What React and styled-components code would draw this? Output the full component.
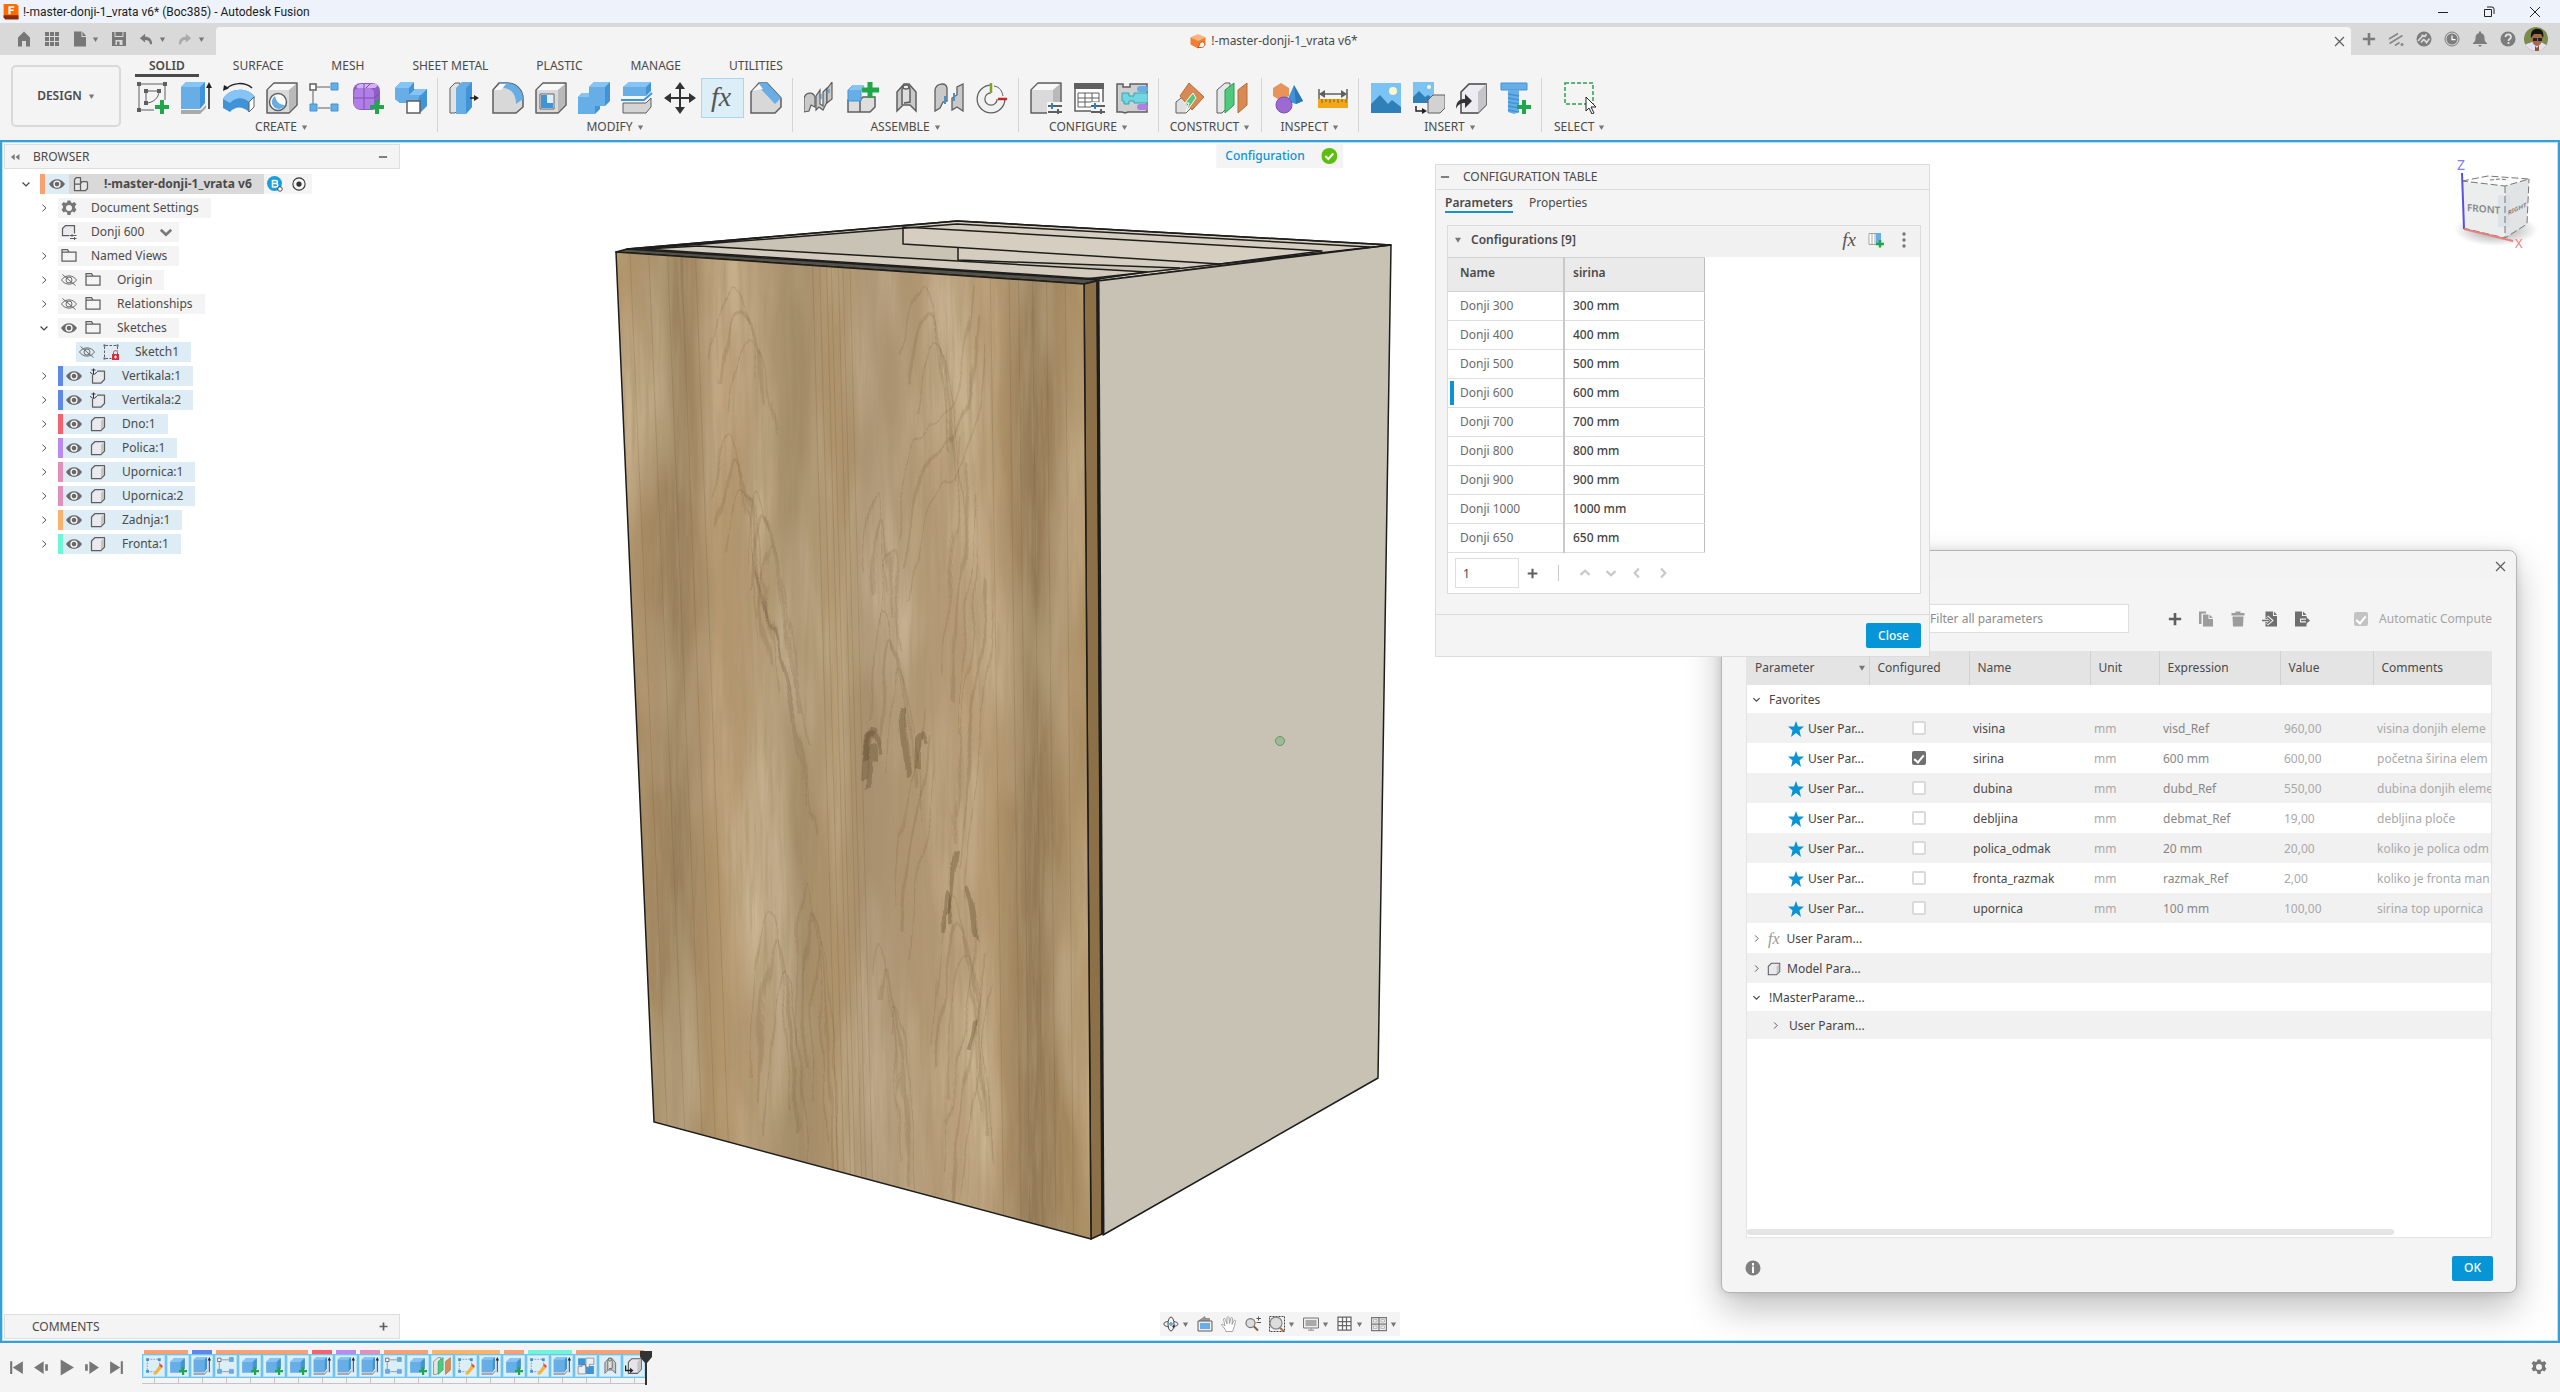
import React, { useState } from "react";
import styled, { createGlobalStyle } from "styled-components";

const GlobalStyle = createGlobalStyle`
  * { box-sizing: border-box; }
  body {
    margin: 0;
    background: #f4f4f4;
    color: #4a4a4a;
    font: 12px/16px "Noto Sans", "Open Sans", sans-serif;
  }
  button, input, select {
    font: inherit;
    color: inherit;
    margin: 0;
    padding: 0;
    border: 0;
    background: none;
  }
  button { cursor: pointer; }
  svg { display: block; flex: none; }
`;

/* ---------- icons ---------- */

const GREY = "#5f5f5f";
const BLUE = "#67ade6";
const BLUE_DARK = "#3f93d6";
const BLUE_LIGHT = "#86c4f5";
const SERIF = '"Liberation Serif", "DejaVu Serif", serif';

const bigPlus = <path d="M18 23h5v-5h4v5h5v4h-5v5h-4v-5h-5z" fill="#22a64b" />;
const sliders = (
  <g strokeWidth="2" fill="none">
    <path d="M18 24h14M18 30h14" stroke={GREY} />
    <path d="M22 21v6" stroke="#1e88d2" />
    <path d="M28 27v5" stroke={GREY} />
  </g>
);
const greyBox = (
  <g stroke={GREY} strokeWidth="1.5" strokeLinejoin="round">
    <path d="M1 8L8 1h23v22l-8 8H1z" fill="#dadada" />
    <path d="M2 8L8 2h22l-7 6z" fill="#f8f8f8" stroke="none" />
    <path d="M23 8l7-6v20l-7 8z" fill="#b9b9b9" stroke="none" />
  </g>
);

const shapes = {
  sketch: (
    <>
      <path d="M3 2h25M2 3v26M28 3v15M3 28h14" stroke={GREY} fill="none" />
      <path d="M9 9h13M9 9v12M22 9c0 7-6 12-13 12" stroke={GREY} fill="none" />
      <path d="M0 0h4v4H0zM26 0h4v4h-4zM0 26h4v4H0zM7 7h4v4H7zM20 7h4v4h-4zM7 19h4v4H7z" fill={GREY} />
      {bigPlus}
    </>
  ),
  extrude: (
    <>
      <path d="M1 28l20 0 5-5v3l-6 6H1z" fill="#a9a9a9" />
      <path d="M1 5l5-5h19l-5 5v22H1z" fill={BLUE} />
      <path d="M1 5l5-5h19l-5 5z" fill={BLUE_LIGHT} />
      <path d="M20 5l5-5v21l-5 6z" fill={BLUE_DARK} />
      <path d="M29 27V4" stroke="#222" strokeWidth="1.5" />
      <path d="M26 6l3-6 3 6z" fill="#222" />
    </>
  ),
  revolve: (
    <>
      <path d="M3 7C10 0 22 0 29 6" stroke="#222" strokeWidth="1.5" fill="none" />
      <path d="M0 9l1-6 5 3z" fill="#222" />
      <path d="M0 17C7 5 25 5 32 15l-6 5v10c-6-6-14-6-19 0L0 26z" fill={BLUE_DARK} />
      <path d="M0 17C7 5 25 5 32 15l-6 5C20 15 13 15 7 21z" fill={BLUE_LIGHT} />
      <path d="M26 20l5-5v10l-5 5z" fill="#fff" stroke={GREY} />
    </>
  ),
  hole: (
    <>
      {greyBox}
      <circle cx="12" cy="20" r="8.5" fill="#fff" stroke={GREY} strokeWidth="1.5" />
      <path d="M9 14a7 7 0 1 0 10 9c-6 0-9-4-10-9z" fill={BLUE} />
    </>
  ),
  pattern: (
    <>
      <path d="M8 5h13M4 9v15M9 26h12" stroke={GREY} fill="none" />
      <path d="M1 2h6v6H1z" fill="#fff" stroke={GREY} strokeWidth="1.5" />
      <path d="M22 1h7v7h-7zM1 22h7v7H1zM22 22h7v7h-7z" fill={BLUE} stroke={BLUE_DARK} />
    </>
  ),
  form: (
    <>
      <rect x="1" y="1" width="27" height="27" rx="8" fill="#8d5fc4" />
      <rect x="2" y="6" width="20" height="21" rx="5" fill="#b07fe6" />
      <path d="M9 2h14c3 0 3 2 0 4H6c-3 0-1-4 3-4z" fill="#d5b0fa" />
      <path d="M12 2v25M2 16h20l5-4M18 2l-4 4" stroke="#7f4cb8" fill="none" />
      {bigPlus}
    </>
  ),
  derive: (
    <>
      <path d="M0 6l6-6h13v7h13v17l-6 6H14v-9H5l-5-4z" fill={BLUE_DARK} />
      <path d="M0 6l6-6h13l-5 6v7h11l-3 8H5l-5-4z" fill={BLUE} />
      <path d="M0 6l6-6h13l-5 6zM14 13l6-6h12l-6 6z" fill={BLUE_LIGHT} />
      <path d="M12 19h13v12H12z" fill="#fff" stroke={GREY} strokeWidth="1.5" />
    </>
  ),
  pressPull: (
    <>
      <path d="M1 6l5-5h5v25l-5 5H1z" fill="#e2e2e2" stroke={GREY} />
      <path d="M7 6l6-6h10v25l-6 7H7z" fill={BLUE} />
      <path d="M17 6l6-6v25l-6 7z" fill={BLUE_DARK} />
      <path d="M21 16h6" stroke="#222" strokeWidth="1.5" />
      <path d="M25 13l5 3-5 3z" fill="#222" />
    </>
  ),
  fillet: (
    <>
      <path d="M1 8l6-7h8c9 0 16 7 16 16v8l-7 6H1z" fill="#d8d8d8" stroke={GREY} strokeWidth="1.5" />
      <path d="M7 1h8c9 0 16 7 16 16l-7 5C24 12 19 7 12 6z" fill={BLUE} />
      <path d="M2 8l6-6h6l-5 6z" fill="#fafafa" />
    </>
  ),
  shell: (
    <>
      {greyBox}
      <path d="M5 12h14v15H5z" fill="#fff" stroke={GREY} />
      <path d="M6 13h6v8h6v5H6z" fill={BLUE_DARK} />
      <path d="M12 13h6v8h-6z" fill="#dff0fc" />
    </>
  ),
  combine: (
    <>
      <path d="M0 15l4-4h7V5l5-5h16v19l-5 5h-5v3l-5 5H0z" fill={BLUE_DARK} />
      <path d="M0 15h11V5h16v19H17v8H0z" fill={BLUE} />
      <path d="M11 5l5-5h16l-5 5zM0 15l4-4h7v4z" fill={BLUE_LIGHT} />
    </>
  ),
  split: (
    <>
      <path d="M2 5l6-5h22l-5 5v9H2z" fill={BLUE} />
      <path d="M2 5l6-5h22l-5 5z" fill={BLUE_LIGHT} />
      <path d="M25 5l5-5v9l-5 5z" fill={BLUE_DARK} />
      <path d="M0 18h23l8-7" stroke={BLUE_DARK} strokeWidth="2" fill="none" />
      <path d="M2 21h23l5-5v9l-5 6H2z" fill="#d4d4d4" stroke={GREY} />
    </>
  ),
  move: (
    <path d="M16 0l5 7h-4v8h8v-4l7 5-7 5v-4h-8v8h4l-5 7-5-7h4v-8H7v4l-7-5 7-5v4h8V7h-4z" fill="#333" />
  ),
  fx: (
    <text x="4" y="24" fontFamily={SERIF} fontStyle="italic" fontSize="28" fill="#555">fx</text>
  ),
  chamfer: (
    <>
      <path d="M1 10l8-9h8l14 15v9l-6 6H1z" fill="#d8d8d8" stroke={GREY} strokeWidth="1.5" />
      <path d="M9 1h8l14 15-6 6L10 6z" fill={BLUE} />
      <path d="M2 9l7-7 4 5z" fill="#f8f8f8" />
    </>
  ),
  joint: (
    <g fill="#c9c9c9" stroke={GREY} strokeWidth="1.2">
      <path d="M0 30V17c1-7 9-8 11-2v10l-4-2-2 6z" />
      <path d="M12 28V14l4-6v14l3 2V10l4-4v14l-4 8-4-3z" />
      <path d="M23 21V7l5-7v17z" />
      <path d="M17 12v5M25 7v4" stroke={BLUE_DARK} />
    </g>
  ),
  newComponent: (
    <>
      <path d="M1 18h12v12H1zM13 18l3-3h12v10l-5 5H13z" fill="#dedede" stroke={GREY} strokeWidth="1.5" />
      <path d="M1 8l4-4h12l-3 4v11H1z" fill={BLUE} stroke={BLUE_DARK} />
      <path d="M1 8l4-4h12l-3 4z" fill={BLUE_LIGHT} />
      <path d="M23 0v16M15 8h17" stroke="#22a64b" strokeWidth="5" />
    </>
  ),
  asBuilt: (
    <g fill="#c9c9c9" stroke={GREY} strokeWidth="1.5">
      <path d="M7 29V10l7-8h5l7 8v19l-6-6h-7z" />
      <path d="M12 23V8c0-6 8-6 8 0v12l-6 1" fill="#dedede" />
      <ellipse cx="16" cy="5" rx="3" ry="2" fill="#eee" />
    </g>
  ),
  jointOrigin: (
    <g fill="#c9c9c9" stroke={GREY} strokeWidth="1.3">
      <path d="M2 29V8c1-7 11-8 12-2v13l-4 1-3 6z" />
      <path d="M19 28V16l5-3V5l6-3v27l-6-4z" />
      <path d="M12 14v8M21 11v8" stroke={BLUE_DARK} strokeWidth="2" />
    </g>
  ),
  motion: (
    <>
      <circle cx="15" cy="17" r="10" fill="none" stroke={GREY} strokeWidth="9" />
      <circle cx="15" cy="17" r="10" fill="none" stroke="#f1f1f1" strokeWidth="6.5" />
      <path d="M15 17V1h16v16z" fill="#f4f4f4" />
      <path d="M15 1v10" stroke="#7da32b" strokeWidth="2.5" />
      <path d="M22 17h9" stroke="#c22a2a" strokeWidth="2.5" />
      <path d="M18 4c6 1 8 5 9 10" stroke={GREY} fill="none" />
    </>
  ),
  config: <>{greyBox}<path d="M17 20h15v12H17z" fill="#f4f4f4" />{sliders}</>,
  configTable: (
    <>
      <path d="M2 4h28v25H2z" fill="#fff" stroke={GREY} strokeWidth="1.5" />
      <path d="M1 1h30v6H1z" fill={GREY} />
      <path d="M5 11h21v14H5zM5 16h21M5 20h21M12 11v14M19 11v14" stroke={GREY} fill="none" />
      <path d="M18 20h14v12H18z" fill="#f4f4f4" />
      {sliders}
    </>
  ),
  plugs: (
    <>
      <path d="M1 2h6v3h7V2h17v28H12l-3 1-3-1H1z" fill="#cfcfcf" stroke={GREY} strokeWidth="1.5" />
      <path d="M6 11h7v3h5v-3h14v10H18v-2h-5v3H8v-3H6z" fill="#71d6df" stroke="#3aa3ad" />
      <rect x="21" y="4" width="11" height="6" rx="3" fill={BLUE} />
      <rect x="21" y="22" width="11" height="6" rx="3" fill="#b07fe6" />
    </>
  ),
  planeTangent: (
    <>
      <path d="M3 31V20l5-4h10v10l-5 5z" fill="#e0e0e0" stroke={GREY} />
      <path d="M16 1l15 14-12 13-12-14z" fill="#d88a55" stroke="#b86a35" />
      <path d="M20 11L12 21h4l-3 9 10-14z" fill="#4fc97c" stroke="#fff" />
    </>
  ),
  plane: (
    <>
      <path d="M1 8l8-7h5v22l-8 8H1z" fill="#e6e6e6" stroke={GREY} />
      <path d="M9 8l9-7v22l-9 8z" fill="#4fc97c" stroke="#2a9a55" />
      <path d="M22 8l9-7v22l-9 8z" fill="#d88a55" stroke="#b86a35" />
    </>
  ),
  inspect: (
    <>
      <path d="M8 1l8 5v8l-8 5-8-5V6z" fill="#e7935a" />
      <path d="M21 3l9 16-7 3-9-3z" fill={BLUE_DARK} />
      <path d="M21 3l2 19 7-3z" fill="#2f78b8" />
      <circle cx="11" cy="23" r="8" fill="#9b6ad2" stroke="#7f4cb8" />
    </>
  ),
  measure: (
    <>
      <path d="M3 7v10M31 7v10M4 12h26" stroke={GREY} strokeWidth="1.5" />
      <path d="M3 12l6-4v8zM31 12l-6-4v8z" fill={GREY} />
      <path d="M2 17h30v9H2z" fill="#f2a71b" />
      <path d="M6 17v4M10 17v3M14 17v4M18 17v3M22 17v4M26 17v3M30 17v4" stroke="#8a5c05" />
    </>
  ),
  image: (
    <>
      <path d="M1 1h30v30H1z" fill="#7cc3f5" />
      <path d="M1 22l9-9 8 9 4-4 9 7v6H1z" fill="#2f7fb8" />
      <circle cx="23" cy="9" r="4" fill="#fdf6c8" />
    </>
  ),
  decal: (
    <>
      <path d="M0 0h21v21H0z" fill="#7cc3f5" />
      <path d="M0 15l6-6 6 6 3-2 6 4v4H0z" fill="#2f7fb8" />
      <circle cx="16" cy="5" r="2" fill="#fdf6c8" />
      <path d="M15 18l5-5h12v13l-5 5H15z" fill="#d2d2d2" stroke={GREY} />
      <path d="M3 24v5h8" stroke="#222" strokeWidth="1.5" fill="none" />
      <path d="M9 26l5 3-5 3z" fill="#222" />
    </>
  ),
  insertDerive: (
    <>
      <path d="M5 10l8-8h17v21l-8 8H5z" fill="#ececf2" stroke="#444" strokeWidth="1.5" />
      <path d="M22 10l8-8v21l-8 8z" fill="#c5c5cb" />
      <path d="M0 27c0-8 4-10 9-10v-5l7 7-7 7v-5c-4 0-7 1-9 6z" fill="#333" />
    </>
  ),
  fastener: (
    <>
      <path d="M2 1h26v7H2z" fill={BLUE} stroke={BLUE_DARK} />
      <path d="M9 8h11v22l-5 2-6-2z" fill={BLUE} />
      <path d="M9 12l11 2M9 16l11 2M9 20l11 2M9 24l11 2M9 28l11 2" stroke={BLUE_DARK} strokeWidth="1.5" />
      {bigPlus}
    </>
  ),
  select: (
    <>
      <path d="M1 1h28v21H1z" fill="none" stroke="#2aa152" strokeWidth="1.5" strokeDasharray="4 2" />
      <path d="M22 15v14l3-3 3 6 2-1-3-6h5z" fill="#fff" stroke="#222" />
    </>
  ),
  sketchEdit: (
    <>
      <path d="M5 4h20M5 26h12M4 5v20M26 5v12" stroke={GREY} strokeDasharray="3 2" />
      <path d="M2 2h5v5H2zM23 2h5v5h-5zM2 23h5v5H2z" fill={BLUE_DARK} />
      <path d="M16 28l10-14 5 4-10 12-6 2z" fill="#f2b43a" />
      <path d="M25 15l2-3 5 4-2 3z" fill="#e5484d" />
    </>
  ),
  boxPlus: (
    <>
      <path d="M2 9l7-7h19v18l-7 8H2z" fill={BLUE} />
      <path d="M2 9l7-7h19l-7 7z" fill={BLUE_LIGHT} />
      <path d="M21 9l7-7v18l-7 8z" fill={BLUE_DARK} />
      {bigPlus}
    </>
  ),
  rigid: (
    <>
      <path d="M2 2h13v13H2zM16 16h14v14H16z" fill={BLUE_DARK} />
      <path d="M16 2h14v11h-8v5h-6zM2 17h7v-3h6v16H2z" fill="#eee" stroke={GREY} />
    </>
  ),
  insertBody: (
    <>
      <path d="M6 9l6-6h17v19l-7 7H6z" fill="#e4e4ea" stroke={GREY} strokeWidth="2" />
      <path d="M22 9l6-6v19l-6 7z" fill="#c4c4c4" />
      <path d="M1 15v9h9" stroke="#222" strokeWidth="2.5" fill="none" />
      <path d="M9 19l6 5-6 5z" fill="#222" />
    </>
  ),
  body: (
    <>
      <path d="M3 10l7-7h19v19l-7 7H3z" fill="#e9e9ee" stroke={GREY} strokeWidth="2.5" strokeLinejoin="round" />
      <path d="M22 10l6-6v17l-6 7z" fill="#c4c4c4" />
    </>
  ),
  grounded: (
    <>
      <path d="M5 12l6-6h18v17l-7 7H5z" fill="#e9e9ee" stroke={GREY} strokeWidth="2.5" strokeLinejoin="round" />
      <path d="M0 0h14v14H0z" fill="#deedf5" />
      <path d="M7 1v12M3 4h8M1 8c1 6 11 6 12 0" stroke="#333" strokeWidth="2" fill="none" />
    </>
  ),
  folder: (
    <path d="M2 6V3h11l3 5h14v18H2zM2 8h14" fill="none" stroke={GREY} strokeWidth="2.5" />
  ),
  gear: (
    <path fillRule="evenodd" fill="#777" d="M13 1h6l1 4 3 1 4-2 4 5-3 3v4l3 3-4 6-4-2-3 2-1 5h-6l-1-5-3-2-4 2-4-6 3-3v-4L1 9l4-5 4 2 3-1zM16 10a6 6 0 1 0 0 12 6 6 0 0 0 0-12z" />
  ),
  docConfig: (
    <>
      <path d="M3 9l6-6h18v20H3z" fill="#e9e9ee" stroke={GREY} strokeWidth="2.5" />
      <path d="M17 19h15v13H17z" fill="#f4f4f4" />
      <path d="M18 23h13M18 29h13M22 20v6M27 26v6" stroke={GREY} strokeWidth="2" />
    </>
  ),
  assembly: (
    <path d="M3 16V7l4-4h8v13zM15 16l3-5h9l2 2v12l-4 4H15zM3 16h12v13H3z" fill="#e6e6e6" stroke={GREY} strokeWidth="2.5" strokeLinejoin="round" />
  ),
  eye: (
    <>
      <path d="M0 16C8 3 24 3 32 16 24 29 8 29 0 16z" fill="#6a6a6a" />
      <circle cx="16" cy="16" r="6" fill="#6a6a6a" stroke="#fff" strokeWidth="2.5" />
    </>
  ),
  eyeOff: (
    <g fill="none" stroke="#6a6a6a" strokeWidth="2">
      <path d="M1 16C8 5 24 5 31 16 24 27 8 27 1 16z" />
      <circle cx="16" cy="16" r="6" />
      <path d="M3 5l26 22" />
    </g>
  ),
  lockedSketch: (
    <>
      <path d="M5 3h22M3 5v22M29 5v9M5 29h12" stroke={GREY} strokeWidth="2" strokeDasharray="5 3" />
      <path d="M1 1h4v4H1zM27 1h4v4h-4zM1 27h4v4H1z" fill={GREY} />
      <path d="M18 20h14v12H18z" fill="#cc3340" />
      <path d="M21 20v-3c0-5 8-5 8 0v3" stroke="#cc3340" strokeWidth="2" fill="none" />
      <path d="M22 26h6M25 23v6" stroke="#fff" strokeWidth="2" />
    </>
  ),
  home: <path d="M16 1l12 12v18h-8V20h-8v11H4V13z" fill="#777" />,
  grid: <path d="M2 2h8v8H2zM12 2h8v8h-8zM22 2h8v8h-8zM2 12h8v8H2zM12 12h8v8h-8zM22 12h8v8h-8zM2 22h8v8H2zM12 22h8v8h-8zM22 22h8v8h-8z" fill="#777" />,
  file: <path d="M4 1h15v11h9v19H4zM21 1l7 9h-7z" fill="#777" />,
  save: <path fillRule="evenodd" d="M2 2h5v10h18V2h5v28H2zM9 2h14v8H9zM9 18v10h14V18zM12 21h5v7h-5z" fill="#777" />,
  undo: <path d="M2 14L14 4v7c10 0 16 6 16 17h-5c0-7-4-10-11-10v6z" fill="#777" />,
  redo: <path d="M30 14L18 4v7C8 11 2 17 2 28h5c0-7 4-10 11-10v6z" fill="#aaa" />,
  minus: <path d="M3 13h26v6H3z" fill="#777" />,
  add: <path d="M13 2h6v11h11v6H19v11h-6V19H2v-6h11z" fill="currentColor" />,
  close: <path d="M5 5l22 22M27 5L5 27" stroke="currentColor" strokeWidth="3" />,
  chevDown: <path d="M5 11l11 11 11-11" fill="none" stroke="currentColor" strokeWidth="4" />,
  chevRight: <path d="M11 5l11 11-11 11" fill="none" stroke="currentColor" strokeWidth="3" />,
  boldDown: <path d="M4 11l12 11 12-11" fill="none" stroke="currentColor" strokeWidth="6" />,
  boldUp: <path d="M4 21l12-11 12 11" fill="none" stroke="currentColor" strokeWidth="6" />,
  boldRight: <path d="M11 4l11 12-11 12" fill="none" stroke="currentColor" strokeWidth="6" />,
  boldLeft: <path d="M21 4L10 16l11 12" fill="none" stroke="currentColor" strokeWidth="6" />,
  rewind: <path d="M15 6v20L3 16zM30 6v20L18 16z" fill="#777" />,
  caret: <path d="M4 7h24L16 27z" fill="#777" />,
  extensions: (
    <>
      <path d="M2 16L20 5M3 25L29 9M14 29l9-6" stroke="#888" strokeWidth="3.5" />
      <circle cx="28" cy="27" r="3" fill="#888" />
    </>
  ),
  jobs: (
    <>
      <circle cx="16" cy="16" r="15" fill="#7c7c7c" />
      <path d="M4 20L14 9M10 23l6-7M11 8l7 3 3-5M16 17l5 6 6-8" stroke="#d9d9d9" strokeWidth="3.5" fill="none" />
    </>
  ),
  clock: (
    <>
      <circle cx="16" cy="16" r="14" fill="none" stroke="#7c7c7c" strokeWidth="2" />
      <circle cx="16" cy="16" r="11" fill="#7c7c7c" />
      <path d="M16 9v8h7" stroke="#fff" strokeWidth="2.5" fill="none" />
    </>
  ),
  bell: <path d="M14 1h4v3c5 1 7 5 7 10 0 6 2 8 5 10v2H2v-2c3-2 5-4 5-10 0-5 2-9 7-10zM12 28h8l-4 4z" fill="#7c7c7c" />,
  help: (
    <>
      <circle cx="16" cy="16" r="15" fill="#7c7c7c" />
      <path d="M11 12c0-7 11-7 11 0 0 4-5 4-5 8M17 22v4" stroke="#e4e4e4" strokeWidth="3.5" fill="none" />
    </>
  ),
  fusion: (
    <>
      <path d="M3 2h24l4 4v24H6l-3-4z" fill="#ff6b00" />
      <path d="M3 23h28v8H6l-3-4z" fill="#8a2b06" />
      <path d="M12 6h11v3h-7v3h6v3h-6v6h-4z" fill="#fff" />
    </>
  ),
  docCube: (
    <>
      <path d="M1 9l15-6 15 6v14l-15 8L1 23z" fill="#f07f35" />
      <path d="M1 9l15-6 15 6-15 7z" fill="#ffb27c" />
      <path d="M20 20c4-4 8-2 9 1 2 4-2 8-6 8h-8c2-1 4-4 5-9z" fill="#fff" stroke="#c9551a" strokeWidth="2" />
    </>
  ),
  check: (
    <>
      <circle cx="16" cy="16" r="16" fill="#5cbf0d" />
      <path d="M8 16l6 6 10-11" stroke="#fff" strokeWidth="4" fill="none" />
    </>
  ),
  badgeB: (
    <>
      <circle cx="15" cy="15" r="15" fill="#1b9fdc" />
      <path d="M11 8v15M11 9h6c5 0 5 6 0 6h-6M17 15c6 0 6 7 0 7h-6" stroke="#fff" strokeWidth="3" fill="none" />
      <circle cx="26" cy="26" r="4.5" fill="#fff" stroke="#222" strokeWidth="1.5" />
    </>
  ),
  radio: (
    <>
      <circle cx="16" cy="16" r="14" fill="none" stroke="#333" strokeWidth="2.5" />
      <circle cx="16" cy="16" r="6" fill="#333" />
    </>
  ),
  columnAdd: (
    <>
      <path d="M2 3h18v22H2zM8 3v22M14 3v22" fill="#fff" stroke="#888" strokeWidth="1.5" />
      <path d="M16 2h10v22H16z" fill={BLUE} />
      <path d="M24 16v15M16 24h16" stroke="#22a64b" strokeWidth="5" />
    </>
  ),
  kebab: (
    <g fill="#777"><circle cx="16" cy="4" r="3.5" /><circle cx="16" cy="16" r="3.5" /><circle cx="16" cy="28" r="3.5" /></g>
  ),
  copy: <path d="M2 1h14v4h-9v21H2zM10 7h11v9h9v15H10zM23 7l7 7h-7z" fill="#9c9c9c" />,
  trash: <path d="M3 4h8V1h10v3h8v5H3zM5 11h22l-1 20H6z" fill="#9c9c9c" />,
  importFile: (
    <>
      <path d="M7 1h15v9h8v21H7zM24 1l6 7h-6z" fill="#6e6e6e" />
      <path d="M0 19h12M10 11l9 8-9 8" stroke="#f4f4f4" strokeWidth="6" fill="none" />
      <path d="M0 19h12M10 12l8 7-8 7" stroke="#6e6e6e" strokeWidth="3" fill="none" />
    </>
  ),
  exportFile: (
    <>
      <path d="M2 1h14v9h9v21H2zM18 1l7 7h-7z" fill="#6e6e6e" />
      <path d="M12 19h14" stroke="#f4f4f4" strokeWidth="8" />
      <path d="M14 19h12" stroke="#6e6e6e" strokeWidth="3" />
      <path d="M24 12l8 7-8 7z" fill="#6e6e6e" />
    </>
  ),
  star: <path d="M16 0l4 11h12l-9 8 3 13-10-8-10 8 3-13-9-8h12z" fill="#0c93d4" />,
  info: (
    <>
      <circle cx="16" cy="16" r="15" fill="#7f7f7f" />
      <path d="M16 6v5M16 13v13" stroke="#fff" strokeWidth="4" />
    </>
  ),
  orbit: (
    <g fill="none" stroke="#4a4a4a" strokeWidth="2">
      <ellipse cx="16" cy="16" rx="6" ry="14" />
      <path d="M22 11c11 2 11 9-2 10M12 22C-2 20-1 12 10 11" />
      <circle cx="16" cy="16" r="3" fill={BLUE} stroke={BLUE} />
      <path d="M23 17l-5 4 5 4z" fill="#333" stroke="none" />
    </g>
  ),
  lookAt: (
    <>
      <path d="M2 10h28v20H2z" fill="#eee" stroke={GREY} strokeWidth="2" />
      <path d="M6 14h20v12H6z" fill={BLUE} />
      <path d="M4 9l12-8v4h9v4z" fill="#999" stroke={GREY} />
    </>
  ),
  pan: (
    <path d="M10 31c-1-5-6-9-9-14 3-2 5 1 7 3L5 6c1-2 3-1 4 1l3 9V3c1-2 3-2 4 0l1 12 3-11c1-2 3-1 3 1l-1 12 4-8c1-1 4-1 3 2-2 7-3 14-6 20z" fill="#fff" stroke="#888" strokeWidth="1.5" />
  ),
  zoomTool: (
    <>
      <path d="M17 20l9 9" stroke="#7a6248" strokeWidth="4" />
      <circle cx="11" cy="14" r="9" fill="#ddd" stroke="#777" strokeWidth="2.5" />
      <path d="M27 1v8M23 5h9M23 13h9" stroke="#555" strokeWidth="2" />
    </>
  ),
  fit: (
    <>
      <path d="M1 1h30v30H1z" fill="none" stroke="#444" strokeWidth="2" strokeDasharray="4 2" />
      <path d="M20 22l9 8" stroke="#a5713a" strokeWidth="4" />
      <circle cx="14" cy="14" r="12" fill="#ddd" stroke="#888" strokeWidth="2.5" />
    </>
  ),
  display: (
    <>
      <path d="M1 4h30v20H1z" fill="#eee" stroke="#777" strokeWidth="2" />
      <path d="M5 8h22v12H5zM10 27h12v3H10zM14 24h4v4h-4z" fill="#aaa" />
    </>
  ),
  gridView: <path d="M2 2h26v26H2zM2 11h26M2 19h26M11 2v26M19 2v26" fill="#fff" stroke="#666" strokeWidth="2.5" />,
  viewports: (
    <>
      <path d="M1 3h30v26H1zM1 16h30M16 3v26" fill="#eee" stroke="#777" strokeWidth="2.5" />
      <path d="M5 7h7v5H5zM20 7h7v5h-7zM5 20h7v5H5zM20 20h7v5h-7z" fill="none" stroke="#aaa" strokeWidth="1.5" />
    </>
  ),
  first: <path d="M4 4h4v24H4zM28 4v24L9 16z" fill="#777" />,
  prev: <path d="M20 4v24L2 16zM23 10h5v12h-5z" fill="#777" />,
  play: <path d="M5 1l25 15L5 31z" fill="#777" />,
  next: <path d="M12 4v24l18-12zM4 10h5v12H4z" fill="#777" />,
  last: <path d="M24 4h4v24h-4zM4 4v24l19-12z" fill="#777" />,
};

function Icon({ name, size = 16 }) {
  return (
    <svg width={size} height={size} viewBox="0 0 32 32" aria-hidden="true">
      {shapes[name]}
    </svg>
  );
}

/* ---------- data ---------- */

const ribbonTabs = ["SOLID", "SURFACE", "MESH", "SHEET METAL", "PLASTIC", "MANAGE", "UTILITIES"];

const ribbonGroups = [
  { label: "CREATE", tools: ["sketch", "extrude", "revolve", "hole", "pattern", "form", "derive"] },
  { label: "MODIFY", tools: ["pressPull", "fillet", "shell", "combine", "split", "move", "fx", "chamfer"] },
  { label: "ASSEMBLE", tools: ["joint", "newComponent", "asBuilt", "jointOrigin", "motion"] },
  { label: "CONFIGURE", tools: ["config", "configTable", "plugs"] },
  { label: "CONSTRUCT", tools: ["planeTangent", "plane"], wide: true },
  { label: "INSPECT", tools: ["inspect", "measure"] },
  { label: "INSERT", tools: ["image", "decal", "insertDerive", "fastener"] },
  { label: "SELECT", tools: ["select"] },
];

const treeNodes = [
  { label: "Document Settings", icon: "gear", arrow: "chevRight" },
  { label: "Donji 600", icon: "docConfig", picker: true },
  { label: "Named Views", icon: "folder", arrow: "chevRight" },
  { label: "Origin", icon: "folder", eye: "eyeOff", arrow: "chevRight" },
  { label: "Relationships", icon: "folder", eye: "eyeOff", arrow: "chevRight" },
  { label: "Sketches", icon: "folder", eye: "eye", arrow: "chevDown" },
  { label: "Sketch1", icon: "lockedSketch", eye: "eyeOff", level: 2, active: true },
  { label: "Vertikala:1", icon: "grounded", eye: "eye", arrow: "chevRight", bar: "#5f87ea", active: true },
  { label: "Vertikala:2", icon: "grounded", eye: "eye", arrow: "chevRight", bar: "#5f87ea", active: true },
  { label: "Dno:1", icon: "body", eye: "eye", arrow: "chevRight", bar: "#f5616f", active: true },
  { label: "Polica:1", icon: "body", eye: "eye", arrow: "chevRight", bar: "#bb8af0", active: true },
  { label: "Upornica:1", icon: "body", eye: "eye", arrow: "chevRight", bar: "#e38fbb", active: true },
  { label: "Upornica:2", icon: "body", eye: "eye", arrow: "chevRight", bar: "#e38fbb", active: true },
  { label: "Zadnja:1", icon: "body", eye: "eye", arrow: "chevRight", bar: "#fbb26b", active: true },
  { label: "Fronta:1", icon: "body", eye: "eye", arrow: "chevRight", bar: "#6ff5d7", active: true },
];

const configurations = [300, 400, 500, 600, 700, 800, 900, 1000, 650];

const favorites = [
  { name: "visina", expression: "visd_Ref", value: "960,00", comment: "visina donjih eleme" },
  { name: "sirina", expression: "600 mm", value: "600,00", comment: "početna širina elem", configured: true },
  { name: "dubina", expression: "dubd_Ref", value: "550,00", comment: "dubina donjih eleme" },
  { name: "debljina", expression: "debmat_Ref", value: "19,00", comment: "debljina ploče" },
  { name: "polica_odmak", expression: "20 mm", value: "20,00", comment: "koliko je polica odm" },
  { name: "fronta_razmak", expression: "razmak_Ref", value: "2,00", comment: "koliko je fronta man" },
  { name: "upornica", expression: "100 mm", value: "100,00", comment: "sirina top upornica" },
];

const navTools = [
  ["orbit", true], ["lookAt"], ["pan"], ["zoomTool"], ["fit", true], ["display", true], ["gridView", true], ["viewports", true],
];

const timeline = [
  { color: "#f7a073", items: ["sketchEdit", "boxPlus"] },
  { color: "#5f87ea", items: ["extrude"] },
  { color: "#f7a073", items: ["pattern", "boxPlus", "boxPlus", "boxPlus"] },
  { color: "#f5616f", items: ["extrude"] },
  { color: "#bb8af0", items: ["extrude"] },
  { color: "#e38fbb", items: ["extrude"] },
  { color: "#f7a073", items: ["pattern", "boxPlus"] },
  { color: "#fbb26b", items: ["plane", "sketchEdit", "extrude"] },
  { color: "#f7a073", items: ["boxPlus"] },
  { color: "#6ff5d7", items: ["sketchEdit", "extrude"] },
  { color: "#f7a073", items: ["rigid", "asBuilt", "insertBody"] },
];

/* ---------- app frame ---------- */

const Page = styled.div`
  display: flex;
  flex-direction: column;
  height: 100vh;
  overflow: hidden;
`;

const TitleBar = styled.header`
  display: flex;
  align-items: center;
  height: 23px;
  padding-left: 2px;
  gap: 4px;
  background: #eef3fb;
  color: #1c1c1c;
  font-family: Roboto, "Noto Sans", sans-serif;
`;

const WindowButtons = styled.div`
  display: flex;
  margin-left: auto;
  padding-right: 2px;

  button {
    display: grid;
    place-items: center;
    width: 46px;
    height: 20px;
  }
`;

const TabBar = styled.div`
  display: flex;
  height: 32px;
  background: #d9d9d9;
`;

const QuickAccess = styled.div`
  display: flex;
  align-items: center;
  width: 216px;
  padding-left: 16px;
  gap: 12px;
`;

const IconButton = styled.button`
  display: inline-flex;
  align-items: center;
  justify-content: center;
  gap: ${(props) => props.$gap || 6}px;
  color: ${(props) => props.$color || "#5f5f5f"};
`;

const DocumentTab = styled.div`
  flex: 1;
  display: flex;
  align-items: center;
  justify-content: center;
  gap: 5px;
  margin-top: 4px;
  padding: 0 5px 0 4px;
  background: #f4f4f4;
  border-radius: 4px 4px 0 0;

  button { margin-left: auto; }
  svg:first-child { margin-left: auto; }
`;

const Account = styled.div`
  display: flex;
  align-items: center;
  gap: 8px;
  padding: 0 12px 0 11px;
`;

const AccountIcons = styled.div`
  display: flex;
  align-items: center;
  gap: 12px;
`;

/* ---------- ribbon ---------- */

const Ribbon = styled.div`
  display: flex;
  height: 85px;
  padding: 5px 11px 0;
  gap: 10px;
`;

const WorkspaceButton = styled.button`
  display: flex;
  align-items: center;
  justify-content: center;
  gap: 6px;
  width: 110px;
  height: 62px;
  margin-top: 5px;
  border: 2px solid #d9d9d9;
  border-radius: 5px;
  font-weight: 600;
`;

const RibbonTabs = styled.nav`
  display: flex;
  gap: 20px;
  padding-left: 4px;
`;

const RibbonTab = styled.button`
  height: 17px;
  padding: 0 14px 3px;
  line-height: 11px;
  font-weight: ${(props) => (props.$active ? 600 : 400)};
  border-bottom: 3px solid ${(props) => (props.$active ? "#4a4a4a" : "transparent")};
`;

const RibbonGroups = styled.div`
  display: flex;
  padding-top: 1px;
`;

const RibbonGroup = styled.section`
  display: flex;
  flex-direction: column;
  align-items: center;
  height: 54px;
  padding: 0 ${(props) => (props.$wide ? 8 : 5)}px;
  border-right: 1px solid #d4d4d4;

  &:first-child { padding-left: 0; }
  &:last-child { border: 0; padding: 0 12px; }
`;

const ToolRow = styled.div`
  display: flex;
`;

const ToolButton = styled.button`
  display: grid;
  place-items: center;
  width: 43px;
  height: 40px;
  background: ${(props) => (props.$active ? "#dceef8" : "none")};
  border: 1px solid ${(props) => (props.$active ? "#a8d6ee" : "transparent")};
`;

const MenuLabel = styled.button`
  display: flex;
  align-items: center;
  gap: 4px;
  white-space: nowrap;
  line-height: 18px;
`;

/* ---------- viewport ---------- */

const Viewport = styled.main`
  flex: 1;
  position: relative;
  display: flex;
  flex-direction: column;
  justify-content: space-between;
  min-height: 0;
  padding: 2px;
  background: #fff;
  border: 2px solid #379fd3;
  box-shadow: inset 0 0 0 1px #b5e4f7;
`;

const ModelLayer = styled.div`
  position: absolute;
  left: 608px;
  top: 73px;
`;

const PanelHeader = styled.div`
  display: flex;
  align-items: center;
  width: 396px;
  height: 25px;
  padding: 0 11px 0 5px;
  background: #f4f4f4;
  border: 1px solid #dedede;

  h2 {
    flex: 1;
    margin: 0 0 0 ${(props) => (props.$plain ? 22 : 13)}px;
    font: inherit;
  }
`;

const Side = styled.aside`
  position: relative;
`;

const Tree = styled.ul`
  list-style: none;
  margin: 3px 0 0;
  padding: 0 0 0 12px;
`;

const TreeRow = styled.li`
  display: flex;
  align-items: center;
  height: 24px;
  padding-left: ${(props) => props.$level * 18}px;
`;

const Twisty = styled.button`
  display: grid;
  place-items: center;
  width: 20px;
  height: 20px;
  margin-right: 4px;
  color: #444;
`;

const TreeItem = styled.div`
  display: flex;
  align-items: center;
  height: 20px;
  background: ${(props) => (props.$active ? "#deedf5" : "#f4f4f4")};
  border-left: ${(props) => (props.$bar ? `5px solid ${props.$bar}` : 0)};
`;

const Slot = styled.span`
  display: grid;
  place-items: center;
  width: ${(props) => props.$width || 22}px;
  height: 20px;
  background: ${(props) => props.$background || "none"};
`;

const NodeLabel = styled.span`
  padding: 0 12px 0 11px;
`;

const RootName = styled.span`
  display: flex;
  align-items: center;
  height: 20px;
  background: #d9d9d9;
  font-weight: 700;
`;

const NodePicker = styled.label`
  display: flex;
  align-items: center;
  padding: 0 6px 0 11px;
  color: #777;

  select {
    appearance: none;
    width: 68px;
    color: #4a4a4a;
  }
`;

const Floating = styled.div`
  position: absolute;
  left: 50%;
  transform: translateX(-50%);
  display: flex;
  align-items: center;
  height: 24px;
  background: #f4f4f4;
`;

const ConfigStatus = styled(Floating)`
  top: 2px;
  gap: 17px;
  padding: 0 6px 0 9px;
  color: #0c93d4;
  font-weight: 500;
`;

const NavBar = styled(Floating)`
  bottom: 5px;
  gap: 8px;
  padding: 0 3px;
`;

const CubeLayer = styled.div`
  position: absolute;
  right: 20px;
  top: 12px;
`;

/* ---------- dialogs ---------- */

const Primary = styled.button`
  height: 25px;
  padding: 0 12px;
  background: #0696d7;
  border-radius: 2px;
  color: #fff;
  font-weight: 500;
`;

const ConfigWindow = styled.section`
  position: absolute;
  right: 628px;
  top: 22px;
  z-index: 2;
  width: 495px;
  background: #f4f4f4;
  border: 1px solid #dcdcdc;
`;

const ConfigTitle = styled.div`
  display: flex;
  align-items: center;
  gap: 13px;
  height: 25px;
  padding-left: 4px;
  border-bottom: 1px solid #dcdcdc;
`;

const ConfigTabs = styled.div`
  display: flex;
  gap: 16px;
  padding: 5px 9px 12px;
`;

const ConfigTab = styled.button`
  height: 18px;
  font-weight: ${(props) => (props.$active ? 600 : 400)};
  border-bottom: 2px solid ${(props) => (props.$active ? "#1890c8" : "transparent")};
`;

const ConfigFrame = styled.div`
  margin: 0 8px 0 11px;
  background: #fff;
  border: 1px solid #dcdcdc;
`;

const ConfigHeading = styled.div`
  display: flex;
  align-items: center;
  height: 31px;
  padding: 0 8px 4px 6px;
  gap: 9px;
  background: #f1f1f1;

  h3 {
    flex: 1;
    margin: 0;
    font-size: 12px;
    font-weight: 600;
  }
`;

const IconRow = styled.div`
  display: flex;
  align-items: center;
  gap: ${(props) => props.$gap}px;
`;

const Fx = styled.span`
  font: italic ${(props) => props.$size}px/20px "Liberation Serif", serif;
  color: ${(props) => props.$color || "#555"};
`;

const ConfigGrid = styled.table`
  border-collapse: collapse;
  table-layout: fixed;
  width: 257px;
  border-right: 1px solid #bdbdbd;

  th, td {
    height: 29px;
    padding: 0 0 0 8px;
    text-align: left;
    border-bottom: 1px solid #dedede;
  }
  thead th {
    height: 34px;
    padding-bottom: 3px;
    background: #eaeaea;
    font-weight: 600;
    border-top: 1px solid #d2d2d2;
    border-bottom-color: #d2d2d2;
  }
  th:first-child {
    width: 116px;
    padding-left: 12px;
    border-right: 2px solid #c9c9c9;
  }
  tbody th { font-weight: 400; color: #6a6a6a; }
  tbody td { font-weight: 500; color: #444; }
  tbody tr[aria-selected="true"] th {
    background: linear-gradient(#0c93d4, #0c93d4) 2px 2px / 4px 24px no-repeat;
  }
`;

const ConfigFooter = styled.div`
  display: flex;
  align-items: center;
  gap: 8px;
  height: 40px;
  padding: 0 7px;

  input {
    width: 64px;
    height: 30px;
    padding: 0 7px;
    border: 1px solid #dedede;
  }
`;

const Divider = styled.span`
  width: 1px;
  height: 16px;
  margin: 0 12px;
  background: #c9c9c9;
`;

const ConfigActions = styled.div`
  display: flex;
  justify-content: flex-end;
  margin-top: 20px;
  padding: 8px;
  border-top: 1px solid #dcdcdc;
`;

const ParameterWindow = styled.section`
  position: absolute;
  right: 41px;
  top: 408px;
  width: 796px;
  background: #f4f4f4;
  border: 1px solid #b4b4b4;
  border-radius: 8px;
  box-shadow: 0 16px 36px rgba(0, 0, 0, 0.25), 0 0 10px rgba(0, 0, 0, 0.12);
`;

const ParameterTitle = styled.div`
  display: flex;
  justify-content: flex-end;
  align-items: center;
  height: 30px;
  padding-right: 9px;
  border-radius: 8px 8px 0 0;
  background: #f3f3f3;
`;

const ParameterTools = styled.div`
  display: flex;
  align-items: center;
  justify-content: flex-end;
  gap: 16px;
  height: 70px;
  padding: 5px 24px 0;

  input[type="text"] {
    width: 208px;
    height: 29px;
    margin-right: 23px;
    padding: 0 8px;
    background: #fff;
    border: 1px solid #dedede;
  }
  input::placeholder { color: #8c8c8c; }
`;

const ComputeLabel = styled.label`
  display: flex;
  align-items: center;
  gap: 11px;
  margin-left: 28px;
  color: #a5a5a5;
`;

const CheckBox = styled.input.attrs({ type: "checkbox" })`
  appearance: none;
  display: grid;
  place-items: center;
  width: 14px;
  height: 14px;
  background: #fff;
  border: 2px solid #dadada;
  border-radius: 2px;

  &:checked { background: #707070; border-color: #707070; }
  &:checked:disabled { background: #c3c3c3; border-color: #c3c3c3; }
  &:checked::after {
    content: "";
    width: 4px;
    height: 8px;
    margin-bottom: 2px;
    border: solid #fff;
    border-width: 0 2px 2px 0;
    transform: rotate(40deg);
  }
`;

const ParameterFrame = styled.div`
  display: flex;
  flex-direction: column;
  justify-content: space-between;
  min-height: 587px;
  margin: 0 24px;
  overflow: hidden;
  background: #fff;
  border: 1px solid #e4e4e4;
  border-top: 0;
`;

const ParameterTable = styled.table`
  border-collapse: collapse;
  table-layout: fixed;
  width: 100%;

  th, td {
    text-align: left;
    white-space: nowrap;
    font-weight: 400;
  }
  thead th {
    height: 34px;
    padding: 0 0 0 8px;
    background: #e4e4e4;
    border-right: 1px solid #d2d2d2;
  }
  thead th:last-child { border-right: 0; }
  tbody th, tbody td { padding: 1px 0 0 4px; }
  tbody td { color: #a9a9a9; }
`;

const Row = styled.tr`
  height: ${(props) => (props.$short ? 28 : 30)}px;
  background: ${(props) => (props.$shaded ? "#f1f1f1" : "#fff")};
`;

const RowHead = styled.div`
  display: flex;
  align-items: center;
  gap: ${(props) => props.$gap || 4}px;
  padding-left: ${(props) => props.$indent || 0}px;
  color: #444;
`;

const SortHead = styled.div`
  display: flex;
  align-items: center;
  justify-content: space-between;
  padding-right: 3px;
`;

const NameCell = styled.td`
  && { color: #4a4a4a; }
`;

const ExpressionCell = styled.td`
  && { color: #868686; }
`;

const CheckCell = styled.td`
  && { padding: 0; }
  input { margin: auto; }
`;

const ScrollThumb = styled.div`
  width: 87%;
  height: 6px;
  margin-bottom: 2px;
  border-radius: 3px;
  background: #e4e4e4;
`;

const ParameterActions = styled.div`
  display: flex;
  align-items: center;
  justify-content: space-between;
  height: 54px;
  padding: 6px 23px 0;
`;

/* ---------- timeline ---------- */

const TimelineBar = styled.footer`
  display: flex;
  align-items: flex-start;
  height: 49px;
  padding: 7px 13px 0 8px;
`;

const Playback = styled.div`
  display: flex;
  gap: 8px;
  width: 134px;
  padding-top: 9px;
`;

const Segment = styled.div`
  display: flex;
  flex-wrap: wrap;
  width: ${(props) => props.$count * 24}px;

  &::before {
    content: "";
    width: 100%;
    height: 4px;
    margin: 0 2px;
    background: ${(props) => props.$color};
  }
`;

const Feature = styled.button`
  display: grid;
  place-items: center;
  width: 24px;
  height: 24px;
  background: #dceef7;
  border: 1px solid #6fc4ea;
  box-shadow: inset 0 0 0 1px #b5e0f3;
`;

const Branch = styled.span`
  flex: 1;
  display: flex;
  height: 6px;

  i {
    width: 24px;
    background:
      linear-gradient(#c4c4c4, #c4c4c4) center top / 1px 5px no-repeat,
      linear-gradient(#c4c4c4, #c4c4c4) center bottom / 100% 1px no-repeat;
  }
`;

const Marker = styled.div`
  margin-left: -6px;
  margin-top: 1px;
`;

const SettingsButton = styled(IconButton)`
  margin: 9px 0 0 auto;
`;

/* ---------- drawings ---------- */

// left and right edge of the door panel, u runs 0..1 across it, v runs 0..1 down it
function doorPoint(u, v) {
  const x = 616 + 468 * u + (38 - 31 * u) * v;
  const top = 252 + 32 * u;
  const bottom = 1122 + 117 * u;
  return `${x.toFixed(1)} ${(top + (bottom - top) * v).toFixed(1)}`;
}

function grain(points, shift = 0) {
  const p = points.map(([u, v]) => doorPoint(u + shift, v + shift * 2));
  return `M${p[0]}C${p[1]} ${p[2]} ${p[3]}`;
}

const straightLines = [0.03, 0.07, 0.11, 0.14, 0.17, 0.42, 0.435, 0.45, 0.46, 0.475, 0.485, 0.5, 0.8, 0.84, 0.86, 0.89, 0.92, 0.96];

const arches = [
  [[0.27, 0.37], [0.3, 0.16], [0.33, 0.4], [0.37, 0.5]],
  [[0.2, 0.3], [0.25, 0.12], [0.28, 0.3], [0.3, 0.45]],
  [[0.28, 0.35], [0.31, 0.4], [0.36, 0.5], [0.38, 0.6]],
  [[0.35, 0.9], [0.36, 0.6], [0.41, 0.7], [0.41, 1]],
  [[0.24, 0.95], [0.28, 0.68], [0.32, 0.7], [0.33, 0.97]],
  [[0.21, 0.14], [0.24, 0.03], [0.3, 0.02], [0.31, 0.16]],
  [[0.62, 0.12], [0.67, -0.04], [0.7, 0.08], [0.72, 0.22]],
  [[0.6, 0.32], [0.66, 0.1], [0.73, 0.28], [0.77, 0.04]],
  [[0.7, 0.46], [0.72, 0.3], [0.73, 0.32], [0.75, 0.2]],
  [[0.53, 0.36], [0.55, 0.24], [0.57, 0.24], [0.58, 0.38]],
  [[0.54, 0.52], [0.56, 0.32], [0.59, 0.4], [0.62, 0.56]],
  [[0.71, 0.64], [0.73, 0.5], [0.75, 0.5], [0.78, 0.32]],
  [[0.58, 0.72], [0.6, 0.55], [0.63, 0.62], [0.65, 0.5]],
  [[0.66, 0.86], [0.7, 0.55], [0.75, 0.75], [0.76, 0.92]],
  [[0.53, 0.8], [0.55, 0.7], [0.57, 0.85], [0.58, 1]],
  [[0.68, 1], [0.7, 0.88], [0.73, 0.84], [0.77, 0.72]],
];

const knots = [
  [[0.5, 0.56], [0.51, 0.5], [0.53, 0.49], [0.54, 0.53]],
  [[0.51, 0.57], [0.51, 0.53], [0.53, 0.5], [0.525, 0.54]],
  [[0.505, 0.54], [0.51, 0.52], [0.52, 0.51], [0.53, 0.5]],
  [[0.62, 0.54], [0.62, 0.49], [0.63, 0.5], [0.64, 0.51]],
  [[0.6, 0.55], [0.6, 0.52], [0.59, 0.5], [0.59, 0.47]],
  [[0.67, 0.71], [0.67, 0.65], [0.68, 0.66], [0.69, 0.7]],
  [[0.68, 0.69], [0.69, 0.67], [0.69, 0.65], [0.7, 0.62]],
  [[0.73, 0.66], [0.74, 0.66], [0.75, 0.69], [0.75, 0.71]],
  [[0.72, 0.83], [0.73, 0.81], [0.73, 0.82], [0.735, 0.8]],
];

function CabinetModel() {
  return (
    <svg width="790" height="1030" viewBox="610 215 790 1030" role="img" aria-label="Cabinet model">
      <defs>
        <linearGradient id="wood">
          <stop offset="0" stopColor="#b2946a" />
          <stop offset="0.13" stopColor="#987f5b" />
          <stop offset="0.22" stopColor="#b3956c" />
          <stop offset="0.3" stopColor="#b49a75" />
          <stop offset="0.38" stopColor="#a28a67" />
          <stop offset="0.46" stopColor="#ae936b" />
          <stop offset="0.53" stopColor="#a88f6f" />
          <stop offset="0.7" stopColor="#b69b77" />
          <stop offset="0.8" stopColor="#b0936a" />
          <stop offset="0.88" stopColor="#937a56" />
          <stop offset="1" stopColor="#ae8f62" />
        </linearGradient>
        <clipPath id="door">
          <path d="M616 252L1084 284 1091 1239 654 1122z" />
        </clipPath>
        <filter id="fibres" x="0" y="0" width="1" height="1">
          <feTurbulence type="fractalNoise" baseFrequency="0.22 0.012" numOctaves="4" seed="7" />
          <feColorMatrix values="0 0 0 0 0.4  0 0 0 0 0.3  0 0 0 0 0.16  1.5 0 0 0 -0.6" />
        </filter>
        <filter id="bands" x="0" y="0" width="1" height="1">
          <feTurbulence type="fractalNoise" baseFrequency="0.02 0.004" numOctaves="3" seed="3" />
          <feColorMatrix values="0 0 0 0 0.79  0 0 0 0 0.67  0 0 0 0 0.49  1 0 0 0 -0.4" />
        </filter>
        <filter id="ragged" x="-0.1" y="-0.1" width="1.2" height="1.2">
          <feTurbulence type="fractalNoise" baseFrequency="0.06 0.012" numOctaves="2" seed="11" />
          <feDisplacementMap in="SourceGraphic" scale="16" xChannelSelector="R" yChannelSelector="G" />
        </filter>
      </defs>

      <g stroke="#1d1d1b" strokeWidth="1.5" strokeLinejoin="round">
        <path d="M627 249L957 221 1391 245 1098 281z" fill="#d5cdbf" />
        <path d="M660 247L903 227V244L958 247V260L1180 269 1147 272 699 246z" fill="#c8c3b4" stroke="none" />
        <path d="M903 227L1322 251 1220 264 903 244z" fill="#d6cfc1" />
        <path d="M958 247V260L1180 268" fill="none" />
        <path d="M645 249L699 246 1147 272 1098 279z" fill="#d3cbbd" />
        <path d="M627 249L957 221 1391 245M640 249L957 224 1370 247" fill="none" />
        <path d="M1098 281L1391 245 1378 1078 1103 1235z" fill="#c7c2b3" />
        <path d="M1085 279L1391 245" />
        <path d="M616 252L627 249 1100 280 1084 284z" fill="#55524b" />
        <path d="M1084 284L1097 281 1102 1234 1091 1239z" fill="#8c7048" />
        <path d="M1098 282L1103 1234" strokeWidth="3" />
      </g>

      <path d="M616 252L1084 284 1091 1239 654 1122z" fill="url(#wood)" />
      <g clipPath="url(#door)">
        <rect x="612" y="248" width="484" height="996" filter="url(#bands)" />
        <rect x="612" y="248" width="484" height="996" filter="url(#fibres)" />
        <g fill="none" stroke="#6d5331" strokeOpacity="0.2">
          {straightLines.map((u) => (
            <path key={u} d={`M${doorPoint(u, 0)}L${doorPoint(u, 1)}`} />
          ))}
        </g>
        <g fill="none" stroke="#6b5233" strokeOpacity="0.16" strokeWidth="1.5" filter="url(#ragged)">
          {arches.map((a, i) => (
            <React.Fragment key={i}>
              <path d={grain(a, -0.014)} />
              <path d={grain(a)} strokeWidth="3" />
              <path d={grain(a, 0.016)} />
            </React.Fragment>
          ))}
        </g>
        <g fill="none" stroke="#5f492b" strokeOpacity="0.35" strokeWidth="5" filter="url(#ragged)">
          {knots.map((k, i) => <path key={i} d={grain(k)} />)}
        </g>
      </g>
      <path d="M616 252L1084 284 1091 1239 654 1122z" fill="none" stroke="#1d1d1b" strokeWidth="1.5" />
      <circle cx="1280" cy="741" r="4.5" fill="#9dbb92" stroke="#6f9468" />
    </svg>
  );
}

function ViewCube() {
  return (
    <svg width="90" height="104" viewBox="2448 154 90 104" role="img" aria-label="View cube">
      <defs>
        <radialGradient id="cubeShadow">
          <stop offset="0" stopColor="#000" stopOpacity="0.4" />
          <stop offset="1" stopColor="#000" stopOpacity="0" />
        </radialGradient>
      </defs>
      <ellipse cx="2496" cy="230" rx="42" ry="16" fill="url(#cubeShadow)" />
      <path d="M2462 181L2488 176 2529 179 2505 186z" fill="#fafafa" />
      <path d="M2462 181L2505 186 2505 238 2463 228z" fill="#eceded" />
      <path d="M2505 186L2529 179 2527 224 2505 238z" fill="#e2e3e5" />
      <path d="M2498 195h12v32h-12z" fill="#d4dde6" opacity="0.6" />
      <path d="M2462 181L2488 176 2529 179 2505 186zM2463 228L2505 238 2527 224 2529 179M2505 186V238" fill="none" stroke="#777" strokeDasharray="7 3" />
      <path d="M2490 180l10-1 8 1" stroke="#777" fill="none" strokeDasharray="4 2" />
      <path d="M2462 173L2464 229" stroke="#5a50e0" strokeWidth="2" />
      <path d="M2464 229L2513 241" stroke="#e88080" strokeWidth="2" />
      <g fontFamily='"Noto Sans", sans-serif' fontWeight="600">
        <text x="2457" y="170" fontSize="14" fontWeight="400" fill="#7d7df0">Z</text>
        <text x="2515" y="248" fontSize="13" fontWeight="400" fill="#f07d7d">X</text>
        <text transform="translate(2467 211) skewY(5)" fontSize="10" fill="#85888c">FRONT</text>
        <text transform="translate(2508 215) skewY(-24)" fontSize="6" fill="#6f7276">RIGHT</text>
      </g>
    </svg>
  );
}

function Avatar() {
  return (
    <svg width="24" height="24" viewBox="0 0 24 24" role="img" aria-label="Account">
      <clipPath id="face"><circle cx="12" cy="12" r="12" /></clipPath>
      <g clipPath="url(#face)">
        <path d="M0 0h24v24H0z" fill="#7c8b4c" />
        <path d="M0 18l8-3h9l7 4v5H0z" fill="#e3e0ef" />
        <ellipse cx="13" cy="12" rx="5" ry="7" fill="#a5694c" />
        <path d="M7 11C6 3 11 1 14 2c5 0 6 5 5 9l-2-4-7 0z" fill="#17130f" />
        <path d="M9 11h4v3H9zM14 11h4v3h-4z" fill="#222" />
        <path d="M11 19l2 2 2-3v6h-4z" fill="#8b4f3a" />
      </g>
    </svg>
  );
}

/* ---------- panels ---------- */

function TreeNode({ node }) {
  return (
    <TreeRow $level={node.level || 1}>
      {node.arrow ? (
        <Twisty aria-label={`Toggle ${node.label}`}><Icon name={node.arrow} size={10} /></Twisty>
      ) : (
        <Slot $width={24} />
      )}
      <TreeItem $active={node.active} $bar={node.bar}>
        {node.eye && <Slot><Icon name={node.eye} /></Slot>}
        <Slot $width={node.eye ? 26 : 22}><Icon name={node.icon} /></Slot>
        {node.picker ? (
          <NodePicker>
            <select aria-label="Active configuration" defaultValue={node.label}>
              {configurations.map((size) => <option key={size}>{`Donji ${size}`}</option>)}
            </select>
            <Icon name="boldDown" size={14} />
          </NodePicker>
        ) : (
          <NodeLabel>{node.label}</NodeLabel>
        )}
      </TreeItem>
    </TreeRow>
  );
}

function Browser() {
  return (
    <Side>
      <PanelHeader>
        <IconButton aria-label="Collapse browser"><Icon name="rewind" size={10} /></IconButton>
        <h2>BROWSER</h2>
        <IconButton aria-label="Minimize browser"><Icon name="minus" size={10} /></IconButton>
      </PanelHeader>
      <Tree>
        <TreeRow $level={0}>
          <Twisty aria-label="Toggle document"><Icon name="chevDown" size={10} /></Twisty>
          <TreeItem $bar="#f9a06f">
            <Slot $width={24} $background="#deedf5"><Icon name="eye" /></Slot>
            <RootName>
              <Slot $width={24}><Icon name="assembly" /></Slot>
              <NodeLabel>!-master-donji-1_vrata v6</NodeLabel>
            </RootName>
            <Slot><Icon name="badgeB" /></Slot>
            <Slot $width={26}><Icon name="radio" size={14} /></Slot>
          </TreeItem>
        </TreeRow>
        {treeNodes.map((node) => <TreeNode key={node.label} node={node} />)}
      </Tree>
    </Side>
  );
}

function ConfigurationTable() {
  return (
    <ConfigWindow>
      <ConfigTitle><Icon name="minus" size={10} />CONFIGURATION TABLE</ConfigTitle>
      <ConfigTabs>
        <ConfigTab $active>Parameters</ConfigTab>
        <ConfigTab>Properties</ConfigTab>
      </ConfigTabs>
      <ConfigFrame>
        <ConfigHeading>
          <Icon name="caret" size={8} />
          <h3>Configurations [9]</h3>
          <IconRow $gap={12}>
            <IconButton aria-label="Change parameters"><Fx $size={19}>fx</Fx></IconButton>
            <IconButton aria-label="Add column"><Icon name="columnAdd" /></IconButton>
            <IconButton aria-label="More"><Icon name="kebab" /></IconButton>
          </IconRow>
        </ConfigHeading>
        <ConfigGrid>
          <thead>
            <tr><th>Name</th><th>sirina</th></tr>
          </thead>
          <tbody>
            {configurations.map((size) => (
              <tr key={size} aria-selected={size === 600}>
                <th scope="row">Donji {size}</th>
                <td>{size} mm</td>
              </tr>
            ))}
          </tbody>
        </ConfigGrid>
        <ConfigFooter>
          <input aria-label="Rows to add" defaultValue="1" />
          <IconButton aria-label="Add rows"><Icon name="add" size={11} /></IconButton>
          <Divider />
          <IconRow $gap={14}>
            <IconButton $color="#c9c9c9" aria-label="Move up"><Icon name="boldUp" size={12} /></IconButton>
            <IconButton $color="#c9c9c9" aria-label="Move down"><Icon name="boldDown" size={12} /></IconButton>
            <IconButton $color="#c9c9c9" aria-label="Move left"><Icon name="boldLeft" size={12} /></IconButton>
            <IconButton $color="#c9c9c9" aria-label="Move right"><Icon name="boldRight" size={12} /></IconButton>
          </IconRow>
        </ConfigFooter>
      </ConfigFrame>
      <ConfigActions><Primary>Close</Primary></ConfigActions>
    </ConfigWindow>
  );
}

function Parameters() {
  const [configured, setConfigured] = useState(favorites.map((f) => Boolean(f.configured)));
  const toggle = (index) => setConfigured(configured.map((c, i) => (i === index ? !c : c)));

  return (
    <ParameterWindow>
      <ParameterTitle>
        <IconButton aria-label="Close parameters"><Icon name="close" size={13} /></IconButton>
      </ParameterTitle>
      <ParameterTools>
        <input type="text" aria-label="Filter" placeholder="Filter all parameters" />
        <IconButton aria-label="Add parameter"><Icon name="add" size={14} /></IconButton>
        <IconButton aria-label="Copy"><Icon name="copy" /></IconButton>
        <IconButton aria-label="Delete"><Icon name="trash" /></IconButton>
        <IconButton aria-label="Import"><Icon name="importFile" /></IconButton>
        <IconButton aria-label="Export"><Icon name="exportFile" /></IconButton>
        <ComputeLabel><CheckBox checked disabled readOnly />Automatic Compute</ComputeLabel>
      </ParameterTools>
      <ParameterFrame>
        <ParameterTable>
          <colgroup>
            <col width="122" /><col width="100" /><col width="121" /><col width="69" />
            <col width="121" /><col width="93" /><col />
          </colgroup>
          <thead>
            <tr>
              <th><SortHead>Parameter<Icon name="caret" size={8} /></SortHead></th>
              <th>Configured</th><th>Name</th><th>Unit</th><th>Expression</th><th>Value</th><th>Comments</th>
            </tr>
          </thead>
          <tbody>
            <Row $short>
              <th colSpan="7"><RowHead $gap={8} $indent={1}><Icon name="chevDown" size={9} />Favorites</RowHead></th>
            </Row>
            {favorites.map((item, index) => (
              <Row key={item.name} $shaded={index % 2 === 0}>
                <th scope="row"><RowHead $indent={37}><Icon name="star" />User Par...</RowHead></th>
                <CheckCell>
                  <CheckBox aria-label={`${item.name} configured`} checked={configured[index]} onChange={() => toggle(index)} />
                </CheckCell>
                <NameCell>{item.name}</NameCell>
                <td>mm</td>
                <ExpressionCell>{item.expression}</ExpressionCell>
                <td>{item.value}</td>
                <td>{item.comment}</td>
              </Row>
            ))}
            <Row>
              <th colSpan="7">
                <RowHead $gap={7} $indent={1}><Icon name="chevRight" size={9} /><Fx $size={16} $color="#999">fx</Fx>User Param...</RowHead>
              </th>
            </Row>
            <Row $shaded>
              <th colSpan="7">
                <RowHead $gap={6} $indent={1}><Icon name="chevRight" size={9} /><Icon name="body" size={14} />Model Para...</RowHead>
              </th>
            </Row>
            <Row $short>
              <th colSpan="7"><RowHead $gap={8} $indent={1}><Icon name="chevDown" size={9} />!MasterParame...</RowHead></th>
            </Row>
            <Row $short $shaded>
              <th colSpan="7"><RowHead $gap={9} $indent={20}><Icon name="chevRight" size={9} />User Param...</RowHead></th>
            </Row>
          </tbody>
        </ParameterTable>
        <ScrollThumb />
      </ParameterFrame>
      <ParameterActions>
        <IconButton aria-label="Help"><Icon name="info" /></IconButton>
        <Primary>OK</Primary>
      </ParameterActions>
    </ParameterWindow>
  );
}

function Timeline() {
  return (
    <TimelineBar>
      <Playback>
        {["first", "prev", "play", "next", "last"].map((name) => (
          <IconButton key={name} aria-label={name}><Icon name={name} size={17} /></IconButton>
        ))}
      </Playback>
      {timeline.map((segment, index) => (
        <Segment key={index} $color={segment.color} $count={segment.items.length}>
          {segment.items.map((name, i) => (
            <Feature key={i} aria-label={name}><Icon name={name} size={18} /></Feature>
          ))}
          <Branch>{segment.items.map((name, i) => <i key={i} />)}</Branch>
        </Segment>
      ))}
      <Marker>
        <svg width="12" height="34" viewBox="0 0 12 34" aria-hidden="true">
          <path d="M0 0h12v6L7 12v22H5V12L0 6z" fill="#333" />
        </svg>
      </Marker>
      <SettingsButton aria-label="Timeline settings"><Icon name="gear" size={16} /></SettingsButton>
    </TimelineBar>
  );
}

export default function App() {
  return (
    <Page>
      <GlobalStyle />
      <TitleBar>
        <Icon name="fusion" size={17} />
        !-master-donji-1_vrata v6* (Boc385) - Autodesk Fusion
        <WindowButtons>
          <button aria-label="Minimize"><svg width="10" height="10"><path d="M0 5.5h10" stroke="#222" /></svg></button>
          <button aria-label="Restore">
            <svg width="11" height="11" fill="none" stroke="#222"><path d="M.5 3.5h7v7h-7zM3 1h5q2 0 2 2v5" /></svg>
          </button>
          <button aria-label="Close"><svg width="10" height="10"><path d="M0 0l10 10M10 0L0 10" stroke="#222" /></svg></button>
        </WindowButtons>
      </TitleBar>

      <TabBar>
        <QuickAccess>
          <IconButton aria-label="Home"><Icon name="home" /></IconButton>
          <IconButton aria-label="Data panel"><Icon name="grid" /></IconButton>
          <IconButton aria-label="File" $gap={4}><Icon name="file" /><Icon name="caret" size={7} /></IconButton>
          <IconButton aria-label="Save"><Icon name="save" /></IconButton>
          <IconButton aria-label="Undo"><Icon name="undo" size={14} /><Icon name="caret" size={7} /></IconButton>
          <IconButton aria-label="Redo"><Icon name="redo" size={14} /><Icon name="caret" size={7} /></IconButton>
        </QuickAccess>
        <DocumentTab>
          <Icon name="docCube" />
          !-master-donji-1_vrata v6*
          <IconButton aria-label="Close document"><Icon name="close" size={13} /></IconButton>
        </DocumentTab>
        <Account>
          <AccountIcons>
            {["add", "extensions", "jobs", "clock", "bell", "help"].map((name) => (
              <IconButton key={name} $color="#7c7c7c" aria-label={name}>
                <Icon name={name} size={name === "add" ? 14 : 16} />
              </IconButton>
            ))}
          </AccountIcons>
          <Avatar />
        </Account>
      </TabBar>

      <Ribbon>
        <WorkspaceButton>DESIGN<Icon name="caret" size={7} /></WorkspaceButton>
        <div>
          <RibbonTabs>
            {ribbonTabs.map((tab) => <RibbonTab key={tab} $active={tab === "SOLID"}>{tab}</RibbonTab>)}
          </RibbonTabs>
          <RibbonGroups>
            {ribbonGroups.map((group) => (
              <RibbonGroup key={group.label} $wide={group.wide}>
                <ToolRow>
                  {group.tools.map((tool) => (
                    <ToolButton key={tool} aria-label={tool} $active={tool === "fx"}><Icon name={tool} size={32} /></ToolButton>
                  ))}
                </ToolRow>
                <MenuLabel>{group.label}<Icon name="caret" size={7} /></MenuLabel>
              </RibbonGroup>
            ))}
          </RibbonGroups>
        </div>
      </Ribbon>

      <Viewport>
        <ModelLayer><CabinetModel /></ModelLayer>
        <Browser />
        <ConfigStatus>Configuration<Icon name="check" /></ConfigStatus>
        <CubeLayer><ViewCube /></CubeLayer>
        <Parameters />
        <ConfigurationTable />
        <NavBar>
          {navTools.map(([name, menu]) => (
            <IconButton key={name} aria-label={name} $gap={3}>
              <Icon name={name} />
              {menu && <Icon name="caret" size={7} />}
            </IconButton>
          ))}
        </NavBar>
        <PanelHeader $plain>
          <h2>COMMENTS</h2>
          <IconButton aria-label="Expand comments"><Icon name="add" size={9} /></IconButton>
        </PanelHeader>
      </Viewport>

      <Timeline />
    </Page>
  );
}
